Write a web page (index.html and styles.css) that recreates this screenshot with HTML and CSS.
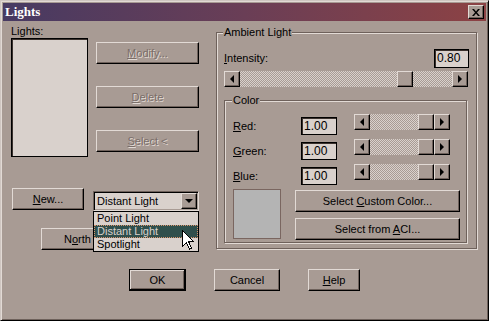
FILE: index.html
```html
<!DOCTYPE html>
<html>
<head>
    <meta charset="utf-8">
    <link rel="stylesheet" href="styles.css">
</head>
<body>
    <div class="window">
        <div class="titlebar">
            <span class="title">Lights</span>
            <span class="close-btn">
                <svg width="8" height="7" viewBox="0 0 8 7"><path d="M0 0h2l2 2.4L6 0h2L5 3.5 8 7H6L4 4.6 2 7H0l3-3.5z" fill="#000"/></svg>
            </span>
        </div>
        <div class="content">
            <div class="main">
                <div class="left-col">
                    <div class="lights-top">
                        <div class="list-block">
                            <div class="label">Lights:</div>
                            <div class="listbox"></div>
                        </div>
                        <div class="side-buttons">
                            <button class="btn" disabled><u>M</u>odify...</button>
                            <button class="btn" disabled><u>D</u>elete</button>
                            <button class="btn" disabled><u>S</u>elect &lt;</button>
                        </div>
                    </div>
                    <div class="new-row">
                        <button class="btn btn-new"><u>N</u>ew...</button>
                        <div class="combo">
                            <span class="combo-text">Distant Light</span>
                            <span class="combo-btn"><span class="tri-down"></span></span>
                            <ul class="dropdown">
                                <li>Point Light</li>
                                <li class="selected">Distant Light</li>
                                <li>Spotlight</li>
                            </ul>
                            <svg class="cursor" width="12" height="20" viewBox="0 0 12 20">
                                <path d="M0.5 0.5V16.5L4.5 12.5L7.5 19L9.5 18L6.5 11.5H11.5Z" fill="#fff" stroke="#000" stroke-width="1" shape-rendering="crispEdges"/>
                            </svg>
                        </div>
                    </div>
                    <div class="north-row">
                        <button class="btn btn-north">N<u>o</u>rth</button>
                    </div>
                </div>

                <div class="group ambient">
                    <span class="group-title">Ambient Light</span>
                    <div class="intensity-row">
                        <span class="label"><u>I</u>ntensity:</span>
                        <div class="edit edit-intensity">0.80</div>
                    </div>
                    <div class="scrollbar scrollbar-wide">
                        <span class="sb-btn"><span class="tri-left"></span></span>
                        <span class="track"><span class="thumb" style="--pos: 0.8"></span></span>
                        <span class="sb-btn"><span class="tri-right"></span></span>
                    </div>

                    <div class="group color">
                        <span class="group-title">Color</span>
                        <div class="color-row">
                            <span class="row-label"><u>R</u>ed:</span>
                            <div class="edit edit-color">1.00</div>
                            <div class="scrollbar scrollbar-small">
                                <span class="sb-btn"><span class="tri-left"></span></span>
                                <span class="track"><span class="thumb" style="--pos: 1"></span></span>
                                <span class="sb-btn"><span class="tri-right"></span></span>
                            </div>
                        </div>
                        <div class="color-row">
                            <span class="row-label"><u>G</u>reen:</span>
                            <div class="edit edit-color">1.00</div>
                            <div class="scrollbar scrollbar-small">
                                <span class="sb-btn"><span class="tri-left"></span></span>
                                <span class="track"><span class="thumb" style="--pos: 1"></span></span>
                                <span class="sb-btn"><span class="tri-right"></span></span>
                            </div>
                        </div>
                        <div class="color-row">
                            <span class="row-label"><u>B</u>lue:</span>
                            <div class="edit edit-color">1.00</div>
                            <div class="scrollbar scrollbar-small">
                                <span class="sb-btn"><span class="tri-left"></span></span>
                                <span class="track"><span class="thumb" style="--pos: 1"></span></span>
                                <span class="sb-btn"><span class="tri-right"></span></span>
                            </div>
                        </div>
                        <div class="color-bottom">
                            <div class="swatch"></div>
                            <div class="color-buttons">
                                <button class="btn btn-wide">Select <u>C</u>ustom Color...</button>
                                <button class="btn btn-wide">Select from <u>A</u>CI...</button>
                            </div>
                        </div>
                    </div>
                </div>
            </div>

            <div class="footer">
                <button class="btn btn-default btn-ok">OK</button>
                <button class="btn btn-cancel">Cancel</button>
                <button class="btn btn-help"><u>H</u>elp</button>
            </div>
        </div>
    </div>
</body>
</html>
```

FILE: styles.css
```css
body {
    margin: 0;
    background-color: #a89b94;
    font-family: "Liberation Sans", Arial, sans-serif;
    font-size: 11px;
    color: #000;
}
.window {
    width: 489px;
    height: 321px;
    box-sizing: border-box;
    border: 1px solid;
    border-color: #cfc6c1 #000 #000 #cfc6c1;
    box-shadow: inset 1px 1px 0 #e2dad5, inset -1px -1px 0 #6e615b;
    padding: 2px;
    background-color: #a89b94;
}
.titlebar {
    height: 18px;
    display: flex;
    align-items: center;
    justify-content: space-between;
    padding: 0 2px;
    background: linear-gradient(to right, #473a62, #6a3e56 50%, #8c4244);
}
.title {
    font-family: "Liberation Serif", "Times New Roman", serif;
    font-weight: bold;
    font-size: 13px;
    color: #fff;
    line-height: 18px;
}
.close-btn {
    width: 16px;
    height: 14px;
    box-sizing: border-box;
    display: flex;
    align-items: center;
    justify-content: center;
    background-color: #a89b94;
    border: 1px solid;
    border-color: #e2dad5 #000 #000 #e2dad5;
    box-shadow: inset -1px -1px 0 #6e615b;
}

.main {
    display: flex;
    align-items: flex-start;
    padding-left: 8px;
}
.left-col {
    width: 189px;
    padding-top: 4px;
}
.lights-top {
    display: flex;
    align-items: flex-start;
}
.label {
    line-height: 13px;
    height: 13px;
}
.listbox {
    width: 77px;
    height: 119px;
    box-sizing: border-box;
    background-color: #d9d1cc;
    border: 1px solid #000;
    box-shadow: inset 1px 1px 0 #3a312d;
}
.side-buttons {
    margin-left: 8px;
    margin-top: 17px;
    display: flex;
    flex-direction: column;
    gap: 22px;
}
.side-buttons .btn {
    width: 103px;
}

.btn {
    font-family: inherit;
    font-size: 11px;
    height: 22px;
    box-sizing: border-box;
    padding: 0;
    color: #000;
    background-color: #a89b94;
    border: 1px solid;
    border-color: #e2dad5 #000 #000 #e2dad5;
    box-shadow: inset -1px -1px 0 #6e615b;
    border-radius: 0;
}
.btn:disabled {
    color: #7a6e69;
    text-shadow: 1px 1px 0 #e2dad5;
}
.btn-default {
    border-color: #000;
    box-shadow: inset -1px -1px 0 #000, inset 1px 1px 0 #e2dad5, inset -2px -2px 0 #6e615b;
}

.new-row {
    margin-top: 31px;
    display: flex;
    align-items: flex-start;
    height: 23px;
}
.btn-new {
    margin-left: 1px;
    width: 72px;
}
.combo {
    position: relative;
    margin-left: 9px;
    margin-top: 3px;
    width: 106px;
    height: 20px;
    box-sizing: border-box;
    border: 1px solid;
    border-color: #6e615b #e2dad5 #e2dad5 #6e615b;
    box-shadow: inset 1px 1px 0 #000, inset -1px -1px 0 #a89b94;
    padding: 1px;
    background-color: #d9d1cc;
    display: flex;
    align-items: center;
}
.combo-text {
    flex: 1;
    padding-left: 2px;
    line-height: 16px;
}
.combo-btn {
    width: 16px;
    height: 16px;
    box-sizing: border-box;
    display: flex;
    align-items: center;
    justify-content: center;
    background-color: #a89b94;
    border: 1px solid;
    border-color: #e2dad5 #000 #000 #e2dad5;
    box-shadow: inset -1px -1px 0 #6e615b;
}
.tri-down {
    width: 0;
    height: 0;
    border-style: solid;
    border-width: 4px 4px 0 4px;
    border-color: #000 transparent transparent transparent;
}
.dropdown {
    position: absolute;
    z-index: 2;
    top: 19px;
    left: -1px;
    width: 106px;
    box-sizing: border-box;
    margin: 0;
    padding: 0;
    list-style: none;
    background-color: #d9d1cc;
    border: 1px solid #000;
}
.dropdown li {
    height: 13px;
    line-height: 13px;
    padding-left: 3px;
}
.dropdown li.selected {
    background-color: #2f4f4c;
    color: #d9d1cc;
    outline: 1px dotted #d8926c;
    outline-offset: -1px;
}
.cursor {
    position: absolute;
    z-index: 3;
    left: 88px;
    top: 38px;
}
.north-row {
    margin-top: 17px;
}
.btn-north {
    margin-left: 30px;
    width: 73px;
}

.group {
    position: relative;
    box-sizing: border-box;
    border: 1px solid #6e615b;
    box-shadow: 1px 1px 0 #e2dad5, inset 1px 1px 0 #e2dad5;
}
.group-title {
    position: absolute;
    top: -7px;
    padding: 0 1px;
    line-height: 13px;
    background-color: #a89b94;
}
.ambient {
    margin-left: 16px;
    margin-top: 11px;
    width: 261px;
    height: 217px;
    padding: 16px 8px 0 7px;
}
.ambient > .group-title {
    left: 6px;
}
.intensity-row {
    display: flex;
    align-items: center;
    justify-content: space-between;
    height: 19px;
}
.edit {
    box-sizing: border-box;
    background-color: #d9d1cc;
    border: 1px solid #000;
    box-shadow: inset 1px 1px 0 #3a312d;
    padding-left: 2px;
    font-size: 12px;
}
.edit-intensity {
    width: 35px;
    height: 19px;
    line-height: 17px;
    margin-right: -1px;
}
.scrollbar {
    display: flex;
    height: 16px;
}
.scrollbar-wide {
    margin-top: 3px;
    width: 244px;
}
.scrollbar-small {
    width: 96px;
    margin-left: 17px;
}
.sb-btn {
    width: 16px;
    height: 16px;
    box-sizing: border-box;
    display: flex;
    align-items: center;
    justify-content: center;
    background-color: #a89b94;
    border: 1px solid;
    border-color: #e2dad5 #000 #000 #e2dad5;
    box-shadow: inset -1px -1px 0 #6e615b;
}
.tri-left {
    width: 0;
    height: 0;
    border-style: solid;
    border-width: 4px 4px 4px 0;
    border-color: transparent #000 transparent transparent;
    margin-right: 1px;
}
.tri-right {
    width: 0;
    height: 0;
    border-style: solid;
    border-width: 4px 0 4px 4px;
    border-color: transparent transparent transparent #000;
}
.track {
    flex: 1;
    display: flex;
    background-image: repeating-conic-gradient(#d9d1cc 0 25%, #a89b94 0 50%);
    background-size: 2px 2px;
}
.thumb {
    width: 16px;
    height: 16px;
    box-sizing: border-box;
    margin-left: calc((100% - 16px) * var(--pos));
    background-color: #a89b94;
    border: 1px solid;
    border-color: #e2dad5 #000 #000 #e2dad5;
    box-shadow: inset -1px -1px 0 #6e615b;
}

.color {
    margin-top: 13px;
    width: 243px;
    height: 143px;
    padding-top: 13px;
}
.color > .group-title {
    left: 7px;
}
.color-row {
    display: flex;
    align-items: flex-start;
    height: 25px;
}
.row-label {
    width: 68px;
    margin-left: 8px;
    margin-top: 3px;
    line-height: 18px;
}
.edit-color {
    width: 36px;
    height: 18px;
    line-height: 16px;
    margin-top: 3px;
}
.color-bottom {
    display: flex;
    align-items: flex-start;
}
.swatch {
    margin-left: 8px;
    width: 48px;
    height: 50px;
    box-sizing: border-box;
    background-color: #b4b4b4;
    border: 1px solid #7a6660;
}
.color-buttons {
    margin-left: 14px;
    margin-top: 1px;
    display: flex;
    flex-direction: column;
    gap: 6px;
}
.btn-wide {
    width: 165px;
}

.footer {
    margin-top: 19px;
    padding-left: 126px;
    display: flex;
    gap: 28px;
}
.btn-ok {
    width: 57px;
}
.btn-cancel {
    width: 66px;
}
.btn-help {
    width: 52px;
}
```
